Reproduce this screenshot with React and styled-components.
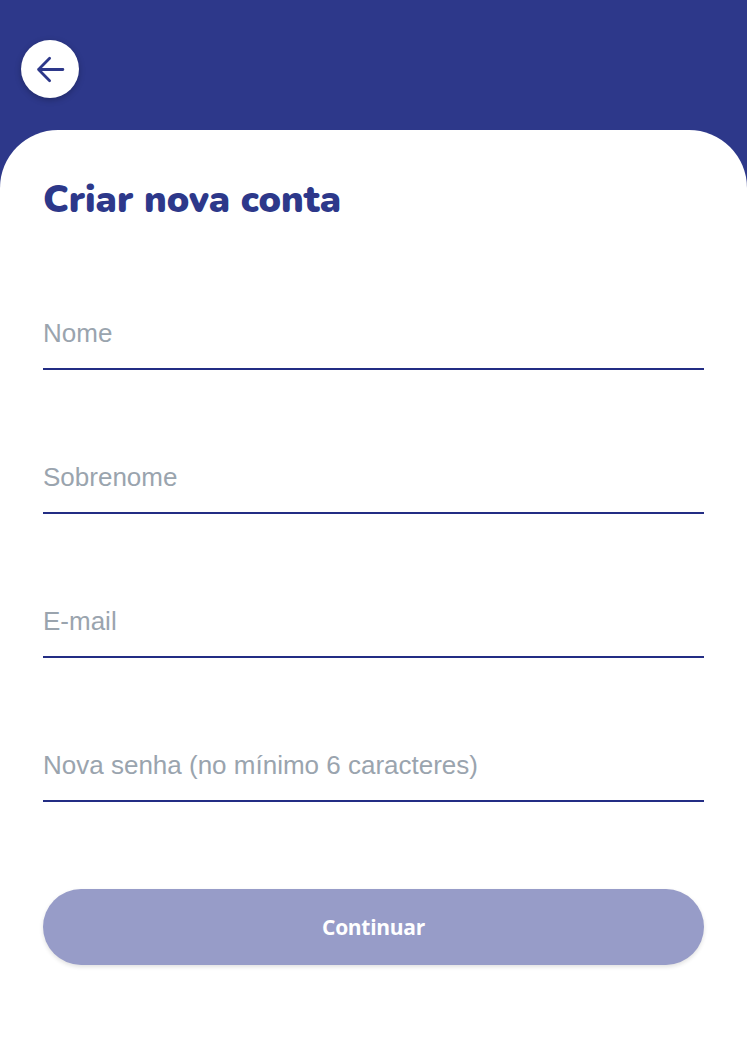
import React from "react";
import styled, { createGlobalStyle } from "styled-components";

const GlobalStyle = createGlobalStyle`
  html, body {
    margin: 0;
    padding: 0;
    background: #2d388a;
  }
  * { box-sizing: border-box; }
`;

const fields = [
  { name: "nome", label: "Nome", type: "text" },
  { name: "sobrenome", label: "Sobrenome", type: "text" },
  { name: "email", label: "E-mail", type: "email" },
  { name: "senha", label: "Nova senha (no mínimo 6 caracteres)", type: "password" },
];

export default function App() {
  return (
    <>
      <GlobalStyle />
      <Page>
        <Header>
          <BackButton aria-label="Voltar">
            <svg width="35" height="35" viewBox="0 0 24 24" fill="none">
              <path
                d="M20.5 12H3.8M11.4 4.3L3.8 12l7.6 7.7"
                stroke="#2d388a"
                strokeWidth="1.9"
                strokeLinecap="round"
                strokeLinejoin="round"
              />
            </svg>
          </BackButton>
        </Header>
        <Card>
          <Title>Criar nova conta</Title>
          <Form onSubmit={(e) => e.preventDefault()}>
            {fields.map((f) => (
              <Field key={f.name}>
                <Input type={f.type} name={f.name} placeholder={f.label} />
              </Field>
            ))}
            <SubmitButton type="submit" disabled>
              Continuar
            </SubmitButton>
          </Form>
        </Card>
      </Page>
    </>
  );
}

const Page = styled.div`
  min-height: 1054px;
  display: flex;
  flex-direction: column;
  background: #2d388a;
`;

const Header = styled.header`
  height: 130px;
  padding: 40px 0 0 21px;
`;

const BackButton = styled.button`
  width: 58px;
  height: 58px;
  border-radius: 50%;
  border: none;
  background: #ffffff;
  display: flex;
  align-items: center;
  justify-content: center;
  padding: 0;
  cursor: pointer;
  box-shadow: 0 2px 6px rgba(0, 0, 0, 0.25);
`;

const Card = styled.main`
  flex: 1;
  background: #ffffff;
  border-radius: 58px 58px 0 0;
  padding: 45px 43px 40px 43px;
`;

const Title = styled.h1`
  margin: 0;
  font-family: "Nunito", "Lato", sans-serif;
  font-weight: 900;
  font-size: 37.5px;
  line-height: 50px;
  color: #2d388a;
`;

const Form = styled.form`
  margin-top: 56px;
  display: flex;
  flex-direction: column;
`;

const Field = styled.div`
  height: 144px;
  display: flex;
  align-items: flex-end;
  &:first-child {
    height: 89px;
  }
`;

const Input = styled.input`
  width: 100%;
  border: none;
  border-bottom: 2px solid #232d84;
  outline: none;
  background: transparent;
  padding: 0 0 20px 0;
  font-family: "Liberation Sans", Arial, sans-serif;
  font-size: 26px;
  line-height: 30px;
  color: #333;
  &::placeholder {
    color: #9aa4ae;
  }
`;

const SubmitButton = styled.button`
  margin-top: 87px;
  height: 76px;
  width: 100%;
  border: none;
  border-radius: 38px;
  background: #979cc8;
  color: #ffffff;
  font-family: "Open Sans", sans-serif;
  font-weight: 700;
  font-size: 21px;
  letter-spacing: -0.3px;
  box-shadow: 0 2px 4px rgba(0, 0, 0, 0.12);
  cursor: default;
`;
